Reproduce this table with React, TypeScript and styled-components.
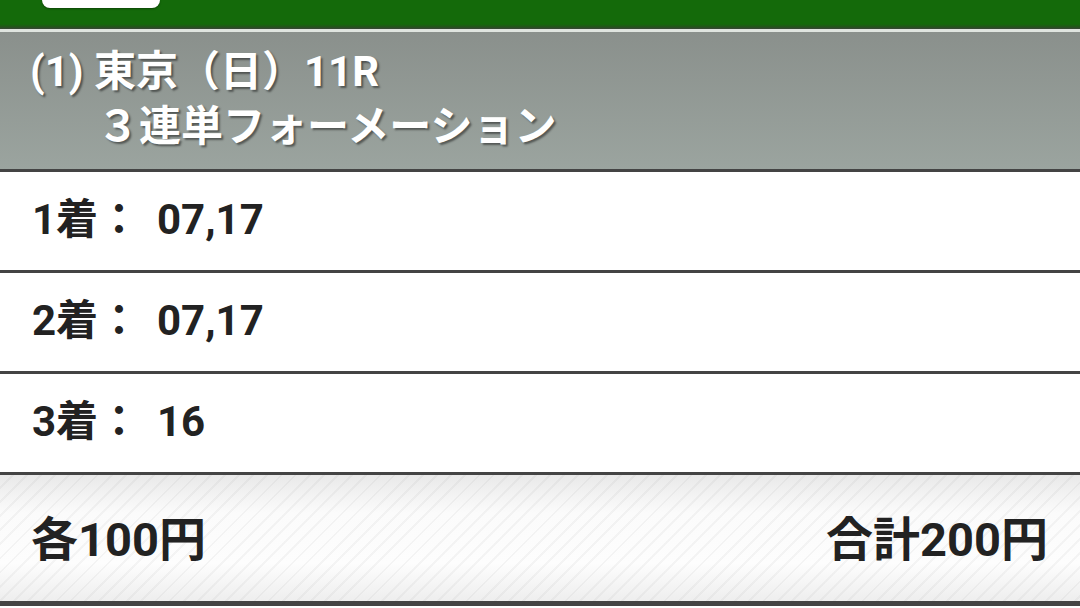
import React from "react";
import styled, { createGlobalStyle } from "styled-components";

const Global = createGlobalStyle`
  html, body { margin: 0; padding: 0; background: #ffffff; }
  body { font-family: Roboto, "Noto Sans CJK JP", sans-serif; }
  * { box-sizing: border-box; }
`;

const Page = styled.div`
  width: 1080px;
  height: 608px;
  overflow: hidden;
  display: flex;
  flex-direction: column;
  background: #ffffff;
`;

const TopBar = styled.div`
  height: 29px;
  flex: none;
  background: linear-gradient(to bottom, #146a0a 0, #146a0a 24px, #24531c 27px, #3a4538 29px);
  padding-left: 42px;
  display: flex;
  align-items: flex-start;
`;

const Tab = styled.div`
  width: 118px;
  height: 8px;
  background: #ffffff;
  border-radius: 0 0 8px 8px;
  box-shadow: 0 1px 2px rgba(0, 0, 0, 0.35);
`;

const Rule = styled.div`
  height: 3px;
  flex: none;
  background: #dfe4df;
`;

const Header = styled.div`
  height: 140px;
  flex: none;
  background: linear-gradient(to bottom, #8a908c, #9ba49f);
  border-bottom: 3px solid #444444;
  padding: 12px 0 0 30px;
  color: #ffffff;
  font-weight: 700;
  font-size: 42px;
  line-height: 55px;
  text-shadow: 2px 2px 2px rgba(0, 0, 0, 0.45);
`;

const HeaderLine = styled.div<{ $indent?: number }>`
  padding-left: ${(p) => p.$indent ?? 0}px;
  white-space: nowrap;
`;

const Row = styled.div`
  height: 101px;
  flex: none;
  border-bottom: 3px solid #444444;
  display: flex;
  align-items: center;
  padding: 0 0 2px 32px;
  color: #222222;
  font-weight: 700;
  font-size: 42px;
  white-space: nowrap;
`;

const RowText = styled.div`
  line-height: 50px;
`;

const Label = styled.span`
  display: inline-block;
  width: 125px;
`;

const Value = styled.span``;

const Footer = styled.div`
  height: 131px;
  flex: none;
  border-bottom: 5px solid #444444;
  display: flex;
  align-items: center;
  justify-content: space-between;
  padding: 0 32px 6px 31px;
  color: #222222;
  font-weight: 700;
  font-size: 47px;
  background:
    repeating-linear-gradient(135deg, rgba(0, 0, 0, 0) 0, rgba(0, 0, 0, 0) 8px, rgba(0, 0, 0, 0.035) 8px, rgba(0, 0, 0, 0.035) 10px),
    linear-gradient(to bottom, #e9e9e9 0, #fbfbfb 30%, #fdfdfd 70%, #eeeeee 100%);
`;

const rows = [
  { label: "1着：", value: "07,17" },
  { label: "2着：", value: "07,17" },
  { label: "3着：", value: "16" },
];

export default function App() {
  return (
    <Page>
      <Global />
      <TopBar>
        <Tab />
      </TopBar>
      <Rule />
      <Header>
        <HeaderLine>(1) 東京（日）11R</HeaderLine>
        <HeaderLine $indent={67}>３連単フォーメーション</HeaderLine>
      </Header>
      {rows.map((r) => (
        <Row key={r.label}>
          <RowText>
            <Label>{r.label}</Label>
            <Value>{r.value}</Value>
          </RowText>
        </Row>
      ))}
      <Footer>
        <span>各100円</span>
        <span>合計200円</span>
      </Footer>
    </Page>
  );
}
